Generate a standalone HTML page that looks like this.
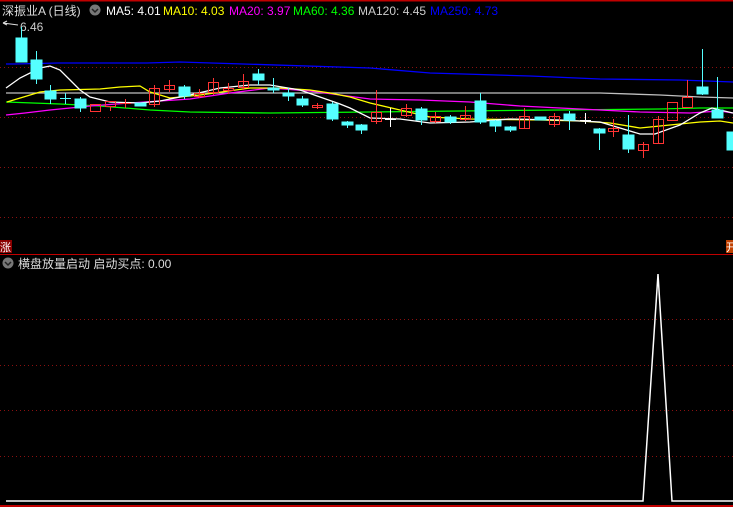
<!DOCTYPE html>
<html><head><meta charset="utf-8"><style>
html,body{margin:0;padding:0;background:#000;width:733px;height:507px;overflow:hidden}
svg{display:block}
text{font-family:"Liberation Sans","Noto Sans CJK SC",sans-serif;font-size:12px}
</style></head><body>
<svg width="733" height="507" viewBox="0 0 733 507" xmlns="http://www.w3.org/2000/svg">
<rect width="733" height="507" fill="#000"/>
<rect x="0" y="0" width="733" height="1.5" fill="#c00000"/>
<g stroke="#8a1010" stroke-width="1" stroke-dasharray="1,3">
<line x1="0" y1="67.5" x2="733" y2="67.5"/><line x1="0" y1="117.5" x2="733" y2="117.5"/>
<line x1="0" y1="167.5" x2="733" y2="167.5"/><line x1="0" y1="217.5" x2="733" y2="217.5"/>
<line x1="0" y1="319.5" x2="733" y2="319.5"/><line x1="0" y1="365.5" x2="733" y2="365.5"/>
<line x1="0" y1="410.5" x2="733" y2="410.5"/><line x1="0" y1="456.5" x2="733" y2="456.5"/>
</g>
<line x1="0" y1="254.5" x2="733" y2="254.5" stroke="#c00000"/>
<line x1="0" y1="506" x2="733" y2="506" stroke="#c00000" stroke-width="2"/>
<!-- header -->
<text x="2" y="15" fill="#ddd">深振业A (日线)</text>
<circle cx="95" cy="10" r="5.5" fill="#777"/><path d="M92 9 L95 12 L98 9" stroke="#222" stroke-width="1.5" fill="none"/>
<text x="106" y="15" fill="#fff">MA5: 4.01</text>
<text x="163" y="15" fill="#ffff00">MA10: 4.03</text>
<text x="229" y="15" fill="#ff00ff">MA20: 3.97</text>
<text x="293" y="15" fill="#00ff00">MA60: 4.36</text>
<text x="358" y="15" fill="#ccc">MA120: 4.45</text>
<text x="430" y="15" fill="#0000ff">MA250: 4.73</text>
<path d="M3 23 L18 25 M3 23 L7 21 M3 23 L7 25" stroke="#ddd" stroke-width="1" fill="none"/>
<text x="20" y="31" fill="#ccc">6.46</text>
<!-- MA lines -->
<g fill="none" stroke-width="1.3">
<polyline stroke="#0000ff" points="6,64 15,64 58,63 147,63 180,62 370,68 430,73 530,76 600,79 680,80 733,82"/>
<polyline stroke="#c0c0c0" points="6,93 600,93 660,95 700,97 733,98"/>
<polyline stroke="#00ff00" points="6,102 60,104 100,106 150,110 190,112 270,113 370,112 460,111 560,110 660,109 700,108 733,108"/>
<polyline stroke="#ff00ff" points="6,115 25,113 50,110 90,106 130,103 190,99 230,93 270,88 310,91 340,95 370,99 420,100 470,102 520,106 560,108 600,110 640,112 690,113 720,111 733,113"/>
<polyline stroke="#ffff00" points="7,102 40,92 60,90 100,89 120,87 140,86 150,92 170,98 200,95 250,88 280,88 310,90 330,93 350,97 370,103 400,110 430,117 470,119 540,120 580,121 610,123 640,128 660,126 680,124 700,122 720,121 733,123"/>
<polyline stroke="#ffffff" points="6,88 20,78 40,68 50,66 60,70 70,80 80,90 90,97 110,102 140,103 160,101 190,95 220,88 250,85 270,85 300,90 320,97 340,104 350,108 370,118 400,119 430,123 470,122 510,119 560,120 600,122 620,128 640,134 655,134 680,125 700,113 712,108 733,113"/>
</g>
<!-- candles -->
<g stroke-width="1">
<g fill="#55ffff" stroke="#55ffff">
<line x1="21.5" y1="27" x2="21.5" y2="62"/><rect x="16" y="38" width="11" height="24"/>
<line x1="36.5" y1="51" x2="36.5" y2="84"/><rect x="31" y="60" width="11" height="19"/>
<line x1="50.5" y1="85" x2="50.5" y2="104"/><rect x="45" y="91" width="11" height="8"/>
<line x1="65.5" y1="93" x2="65.5" y2="104"/><line x1="60" y1="98.5" x2="71" y2="98.5"/>
<line x1="80.5" y1="97" x2="80.5" y2="112"/><rect x="75" y="99" width="11" height="9"/>
<rect x="135" y="103" width="11" height="3"/>
<line x1="184.5" y1="85" x2="184.5" y2="99"/><rect x="179" y="87" width="11" height="9"/>
<line x1="258.5" y1="69" x2="258.5" y2="85"/><rect x="253" y="74" width="11" height="6"/>
<line x1="273.5" y1="78" x2="273.5" y2="93"/><rect x="268" y="88" width="11" height="2"/>
<line x1="288.5" y1="88" x2="288.5" y2="101"/><rect x="283" y="93" width="11" height="3"/>
<line x1="302.5" y1="96" x2="302.5" y2="107"/><rect x="297" y="99" width="11" height="6"/>
<line x1="332.5" y1="102" x2="332.5" y2="121"/><rect x="327" y="104" width="11" height="15"/>
<line x1="347.5" y1="121" x2="347.5" y2="128"/><rect x="342" y="122" width="11" height="3"/>
<line x1="361.5" y1="124" x2="361.5" y2="134"/><rect x="356" y="125" width="11" height="5"/>
<line x1="421.5" y1="107" x2="421.5" y2="125"/><rect x="416" y="109" width="11" height="11"/>
<line x1="450.5" y1="115" x2="450.5" y2="124"/><rect x="445" y="117" width="11" height="5"/>
<line x1="480.5" y1="93" x2="480.5" y2="124"/><rect x="475" y="101" width="11" height="21"/>
<line x1="495.5" y1="120" x2="495.5" y2="132"/><rect x="490" y="121" width="11" height="5"/>
<line x1="510.5" y1="126" x2="510.5" y2="132"/><rect x="505" y="127" width="11" height="3"/>
<rect x="535" y="117" width="11" height="3"/>
<line x1="569.5" y1="111" x2="569.5" y2="130"/><rect x="564" y="114" width="11" height="6"/>
<line x1="599.5" y1="128" x2="599.5" y2="150"/><rect x="594" y="129" width="11" height="4"/>
<line x1="628.5" y1="115" x2="628.5" y2="153"/><rect x="623" y="135" width="11" height="14"/>
<line x1="702.5" y1="49" x2="702.5" y2="95"/><rect x="697" y="87" width="11" height="7"/>
<line x1="717.5" y1="77" x2="717.5" y2="118"/><rect x="712" y="110" width="11" height="8"/>
<rect x="727" y="132" width="6" height="18"/>
</g>
<g fill="none" stroke="#ff3333">
<rect x="90.5" y="104.5" width="10" height="7"/>
<rect x="105.5" y="101.5" width="10" height="5"/><line x1="110.5" y1="106" x2="110.5" y2="111"/>
<line x1="120" y1="103.5" x2="131" y2="103.5"/><line x1="125.5" y1="99" x2="125.5" y2="108"/>
<rect x="149.5" y="88.5" width="10" height="16"/><line x1="154.5" y1="85" x2="154.5" y2="107"/>
<rect x="164.5" y="85.5" width="10" height="4"/><line x1="169.5" y1="80" x2="169.5" y2="92"/>
<rect x="194.5" y="93.5" width="10" height="3"/><line x1="199.5" y1="89" x2="199.5" y2="98"/>
<rect x="208.5" y="82.5" width="10" height="10"/><line x1="213.5" y1="78" x2="213.5" y2="95"/>
<rect x="223.5" y="88.5" width="10" height="2"/><line x1="228.5" y1="83" x2="228.5" y2="94"/>
<rect x="238.5" y="81.5" width="10" height="6"/><line x1="243.5" y1="74" x2="243.5" y2="90"/>
<rect x="312.5" y="105.5" width="10" height="2"/><line x1="317.5" y1="103" x2="317.5" y2="109"/>
<rect x="371.5" y="112.5" width="10" height="9"/><line x1="376.5" y1="90" x2="376.5" y2="124"/>
<rect x="401.5" y="108.5" width="10" height="7"/><line x1="406.5" y1="104" x2="406.5" y2="117"/>
<rect x="430.5" y="116.5" width="10" height="5"/><line x1="435.5" y1="112" x2="435.5" y2="123"/>
<rect x="460.5" y="115.5" width="10" height="4"/><line x1="465.5" y1="106" x2="465.5" y2="121"/>
<rect x="519.5" y="116.5" width="10" height="12"/><line x1="524.5" y1="108" x2="524.5" y2="129"/>
<rect x="549.5" y="116.5" width="10" height="8"/><line x1="554.5" y1="113" x2="554.5" y2="127"/>
<rect x="608.5" y="128.5" width="10" height="3"/><line x1="613.5" y1="119" x2="613.5" y2="137"/>
<rect x="638.5" y="144.5" width="10" height="6"/><line x1="643.5" y1="142" x2="643.5" y2="158"/>
<rect x="653.5" y="119.5" width="10" height="24"/><line x1="658.5" y1="116" x2="658.5" y2="144"/>
<rect x="667.5" y="102.5" width="10" height="18"/>
<rect x="682.5" y="97.5" width="10" height="10"/><line x1="687.5" y1="80" x2="687.5" y2="98"/>
</g>
<g stroke="#fff">
<line x1="385" y1="119.5" x2="396" y2="119.5"/><line x1="390.5" y1="108" x2="390.5" y2="127"/>
<line x1="580" y1="120.5" x2="591" y2="120.5"/><line x1="585.5" y1="113" x2="585.5" y2="124"/>
</g>
</g>
<rect x="0" y="240" width="12" height="13" fill="#8b0000"/>
<text x="0" y="251" fill="#fff" font-size="11" style="font-size:11px">涨</text>
<rect x="726" y="240" width="7" height="13" fill="#c04000"/>
<text x="726" y="251" fill="#fff" style="font-size:11px">开</text>
<!-- lower panel -->
<circle cx="8" cy="263" r="5.5" fill="#777"/><path d="M5 262 L8 265 L11 262" stroke="#222" stroke-width="1.5" fill="none"/>
<text x="18" y="268" fill="#ddd">横盘放量启动 启动买点: 0.00</text>
<polyline fill="none" stroke="#fff" stroke-width="1.5" points="6,501 643,501 658,274 672,501 733,501"/>
</svg>
</body></html>
